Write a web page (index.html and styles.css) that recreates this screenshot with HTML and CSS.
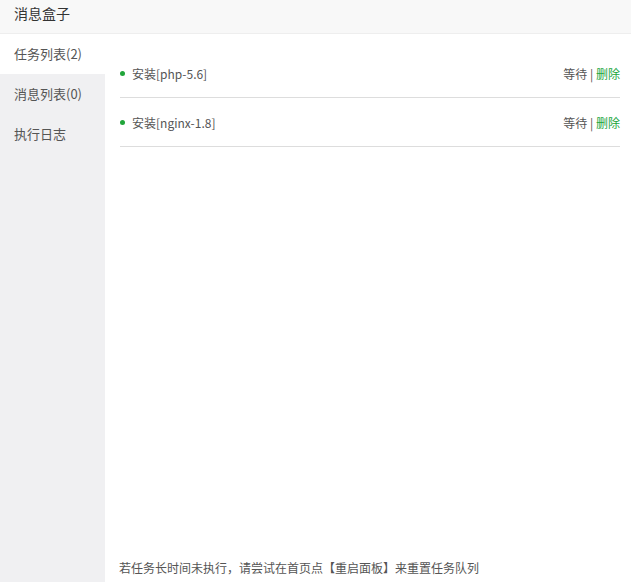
FILE: index.html
```html
<!DOCTYPE html>
<html lang="zh-CN">
<head>
    <meta charset="UTF-8">
    <title>消息盒子</title>
    <link rel="stylesheet" href="styles.css">
</head>
<body>
    <div class="msgbox">
        <header class="msgbox-title">消息盒子</header>
        <div class="msgbox-body">
            <ul class="tabs">
                <li class="active">任务列表(2)</li>
                <li>消息列表(0)</li>
                <li>执行日志</li>
            </ul>
            <div class="panel">
                <ul class="task-list">
                    <li>
                        <span class="task-name"><i class="dot"></i>安装[php-5.6]</span>
                        <span class="task-ops">等待 | <a href="#">删除</a></span>
                    </li>
                    <li>
                        <span class="task-name"><i class="dot"></i>安装[nginx-1.8]</span>
                        <span class="task-ops">等待 | <a href="#">删除</a></span>
                    </li>
                </ul>
                <p class="tip">若任务长时间未执行，请尝试在首页点【重启面板】来重置任务队列</p>
            </div>
        </div>
    </div>
</body>
</html>
```

FILE: styles.css
```css
body {
    margin: 0;
    padding: 0;
    font-family: "Microsoft YaHei", "Noto Sans CJK SC", sans-serif;
    color: #333;
    background: #fff;
}

.msgbox {
    width: 631px;
    height: 582px;
    display: flex;
    flex-direction: column;
    overflow: hidden;
}

.msgbox-title {
    height: 33px;
    line-height: 27px;
    padding-left: 14px;
    font-size: 14px;
    color: #333;
    background: #f8f8f8;
    border-bottom: 1px solid #eee;
    flex-shrink: 0;
}

.msgbox-body {
    flex: 1;
    display: flex;
}

.tabs {
    width: 105px;
    margin: 0;
    padding: 0;
    list-style: none;
    background: #f0f0f2;
    flex-shrink: 0;
}

.tabs li {
    height: 40px;
    line-height: 40px;
    padding-left: 14px;
    font-size: 13px;
    color: #555;
}

.tabs li.active {
    background: #fff;
}

.panel {
    flex: 1;
    display: flex;
    flex-direction: column;
    padding: 15px 11px 0 15px;
}

.task-list {
    margin: 0;
    padding: 0;
    list-style: none;
    flex: 1;
}

.task-list li {
    display: flex;
    justify-content: space-between;
    align-items: center;
    height: 48px;
    border-bottom: 1px solid #ddd;
    font-size: 12px;
    color: #555;
}

.task-name {
    display: flex;
    align-items: center;
}

.dot {
    display: inline-block;
    width: 5px;
    height: 5px;
    border-radius: 50%;
    background: #20a53a;
    margin-right: 7px;
}

.task-ops a {
    color: #20a53a;
    text-decoration: none;
}

.tip {
    margin: 0 0 0 -1px;
    height: 28px;
    line-height: 28px;
    font-size: 12px;
    color: #555;
}
```
